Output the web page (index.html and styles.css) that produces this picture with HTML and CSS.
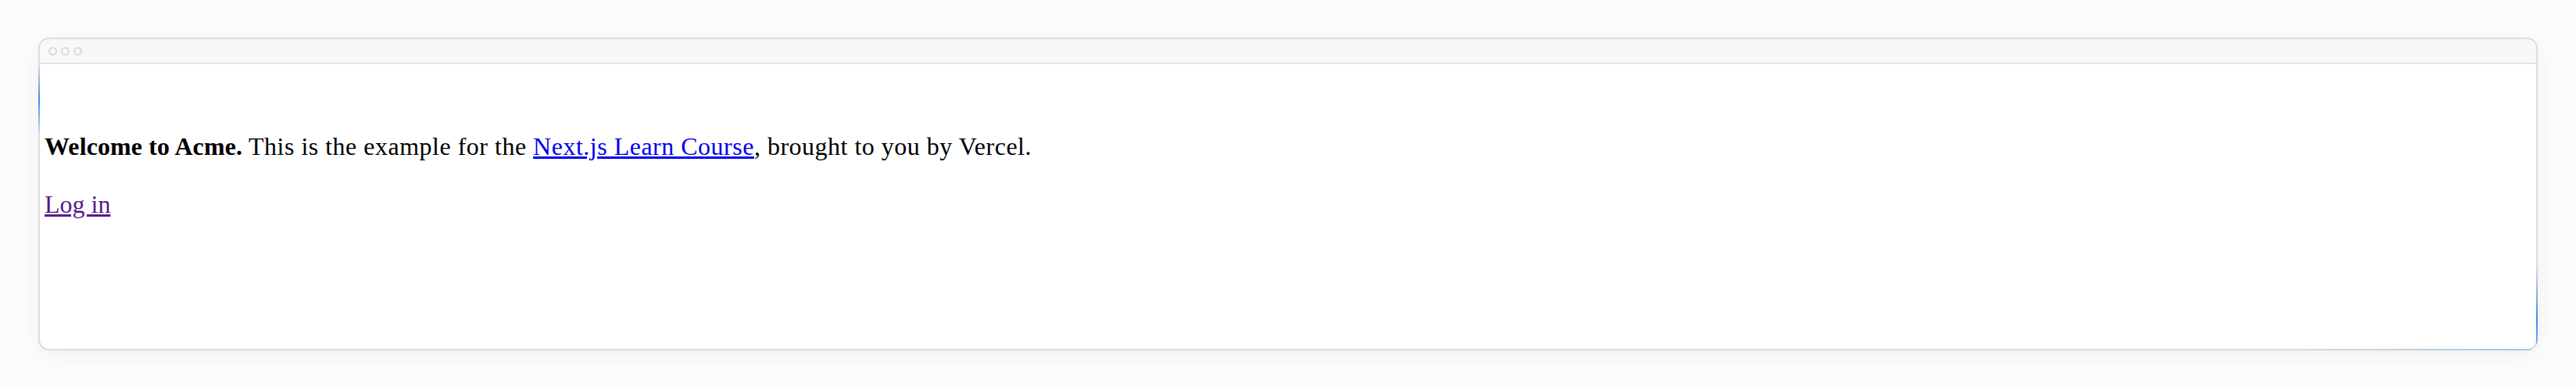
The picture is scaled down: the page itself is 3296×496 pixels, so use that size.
FILE: index.html
```html
<!DOCTYPE html>
<html lang="en">
<head>
<meta charset="utf-8">
<title>Acme</title>
<link rel="stylesheet" href="styles.css">
</head>
<body>
  <div class="window">
    <div class="inner">
      <div class="titlebar">
        <span class="dot"></span><span class="dot"></span><span class="dot"></span>
      </div>
      <div class="content">
        <p class="intro"><strong class="brand">Welcome to Acme.</strong> This is the example for the <a class="course" href="#">Next.js Learn Course</a>, brought to you by Vercel.</p>
        <a class="login" href="#">Log in</a>
      </div>
    </div>
  </div>
</body>
</html>
```

FILE: styles.css
```css
html, body {
  margin: 0;
  padding: 0;
}
body {
  background: #fcfcfc;
  width: 3296px;
  height: 496px;
  padding: 48px 0 0 49px;
  box-sizing: border-box;
}
.window {
  width: 3198px;
  height: 400px;
  box-sizing: border-box;
  padding: 2px;
  border-radius: 14px;
  overflow: hidden;
  box-shadow: 0 6px 28px rgba(0, 0, 0, 0.05);
  background:
    linear-gradient(to bottom, rgba(74,144,226,0) 0%, #3d8ce0 50%, rgba(74,144,226,0) 100%) left 0 top 34px / 2px 90px no-repeat,
    linear-gradient(to bottom, rgba(74,144,226,0) 0%, #3d8ce0 65%, #8fbbe6 100%) right 0 top 292px / 2px 108px no-repeat,
    linear-gradient(to right, rgba(160,198,225,0) 0%, #a4c6e0 100%) right 0 bottom 0 / 340px 2px no-repeat,
    #dcdcdc;
}
.inner {
  height: 100%;
  background: #ffffff;
  border-radius: 12px;
  overflow: hidden;
  display: flex;
  flex-direction: column;
}
.titlebar {
  height: 30px;
  background: #f9f8f8;
  border-bottom: 2px solid #e6e5e5;
  display: flex;
  align-items: center;
  gap: 5px;
  padding-left: 11px;
  flex-shrink: 0;
}
.dot {
  width: 11px;
  height: 11px;
  box-sizing: border-box;
  border-radius: 50%;
  border: 2px solid #dadada;
}
.content {
  padding: 84px 6px 0 6px;
  font-family: "Liberation Serif", "Times New Roman", serif;
  font-size: 32px;
  line-height: 42px;
  color: #000;
}
.intro {
  margin: 0 0 32px 0;
  letter-spacing: 0.5px;
}
.brand {
  letter-spacing: 0.1px;
}
.course {
  color: #0000ee;
}
.login {
  color: #551a8b;
}
```
